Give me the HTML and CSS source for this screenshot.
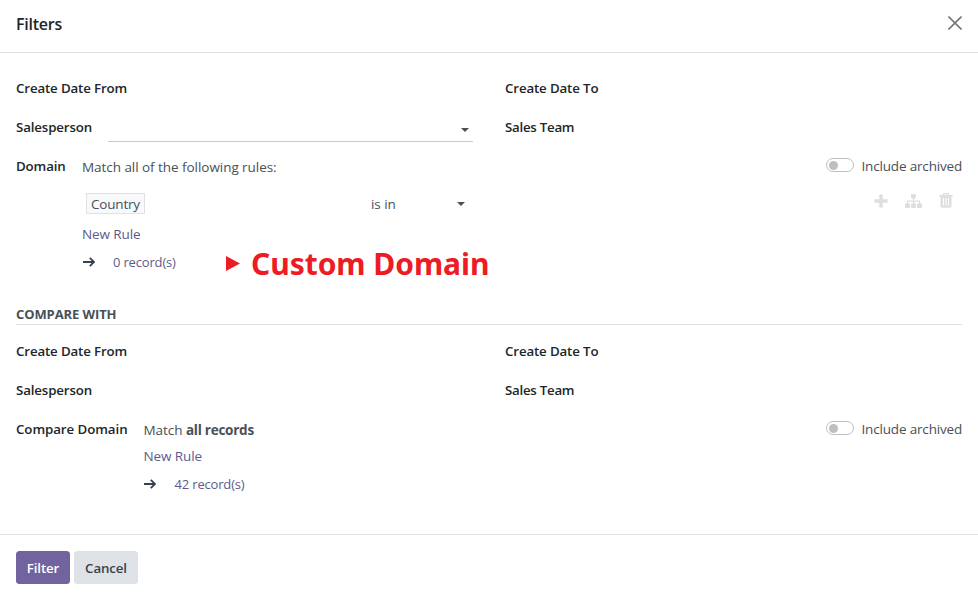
FILE: index.html
```html
<!DOCTYPE html>
<html lang="en">
<head>
<meta charset="utf-8">
<title>Filters</title>
<link rel="stylesheet" href="styles.css">
</head>
<body>
<svg class="defs" aria-hidden="true">
  <symbol id="arrow" viewBox="0 0 12 10"><path d="M0 5H11M6.8 .8L11 5L6.8 9.2" fill="none" stroke="currentColor" stroke-width="1.8"/></symbol>
</svg>
<div class="dialog">
  <header class="header">
    <h4 class="title">Filters</h4>
    <button class="close" aria-label="Close"><svg width="14" height="14" viewBox="0 0 14 14"><path d="M.5 .5L13.5 13.5M13.5 .5L.5 13.5" stroke="currentColor" stroke-width="1.6"/></svg></button>
  </header>
  <main class="body">
    <div class="row"><div class="cell label">Create Date From</div><div class="cell label">Create Date To</div></div>
    <div class="row">
      <div class="cell"><span class="label">Salesperson</span><div class="select"><i class="caret"></i></div></div>
      <div class="cell label team">Sales Team</div>
    </div>
    <div class="domain first">
      <span class="label domain-label">Domain</span>
      <div class="editor">
        <div class="line match"><span>Match all of the following rules:</span><label class="archived"><span class="switch"></span><span class="archived-text">Include archived</span></label></div>
        <div class="rule">
          <div class="rule-field"><span class="tag">Country</span></div>
          <div class="operator"><span class="op-text">is in</span><i class="caret"></i></div>
          <div class="tools">
            <svg width="14" height="14" viewBox="0 0 14 14"><path d="M5.3 .5H8.7V5.3H13.6V8.7H8.7V13.5H5.3V8.7H.4V5.3H5.3Z" fill="currentColor"/></svg>
            <svg width="17" height="14" viewBox="0 0 17 14"><path d="M6.7 0H10.3Q11 0 11 .7V3.8Q11 4.5 10.3 4.5H9.1V6.5H14.2Q15.2 6.5 15.2 7.5V9.5H16.3Q17 9.5 17 10.2V13.3Q17 14 16.3 14H12.7Q12 14 12 13.3V10.2Q12 9.5 12.7 9.5H14V7.7H9.1V9.5H10.3Q11 9.5 11 10.2V13.3Q11 14 10.3 14H6.7Q6 14 6 13.3V10.2Q6 9.5 6.7 9.5H7.9V7.7H3V9.5H4.3Q5 9.5 5 10.2V13.3Q5 14 4.3 14H.7Q0 14 0 13.3V10.2Q0 9.5 .7 9.5H1.8V7.5Q1.8 6.5 2.8 6.5H7.9V4.5H6.7Q6 4.5 6 3.8V.7Q6 0 6.7 0Z" fill="currentColor"/></svg>
            <svg width="14" height="15" viewBox="0 0 14 15"><path d="M4.7 2.2V.7H9.3V2.2" fill="none" stroke="currentColor" stroke-width="1.2"/><path d="M.3 2H13.7V3.5H12.5V13.3Q12.5 14.7 11.2 14.7H2.8Q1.5 14.7 1.5 13.3V3.5H.3Z" fill="currentColor"/><path d="M4.5 5V12.6M7 5V12.6M9.5 5V12.6" stroke="#fff"/></svg>
          </div>
        </div>
        <div class="line new"><a>New Rule</a></div>
        <div class="line records"><svg class="arrow" width="12" height="10"><use href="#arrow"/></svg><a class="count">0 record(s)</a>
          <div class="callout"><svg width="14" height="16" viewBox="0 0 14 16"><path d="M0 0L14 7.5L0 15Z" fill="currentColor"/></svg><span>Custom Domain</span></div>
        </div>
      </div>
    </div>
    <h5 class="section">COMPARE WITH</h5>
    <div class="row"><div class="cell label">Create Date From</div><div class="cell label">Create Date To</div></div>
    <div class="row"><div class="cell label">Salesperson</div><div class="cell label team">Sales Team</div></div>
    <div class="domain">
      <span class="label compare-label">Compare Domain</span>
      <div class="editor">
        <div class="line match"><span>Match <b>all records</b></span><label class="archived"><span class="switch"></span><span class="archived-text">Include archived</span></label></div>
        <div class="line new compare-new"><a>New Rule</a></div>
        <div class="line records"><svg class="arrow" width="12" height="10"><use href="#arrow"/></svg><a class="count">42 record(s)</a></div>
      </div>
    </div>
  </main>
  <footer class="footer"><button class="btn primary">Filter</button><button class="btn">Cancel</button></footer>
</div>
</body>
</html>
```
FILE: styles.css
```css
* { box-sizing: border-box; }
body {
  margin: 0;
  background: #fff;
  color: #495057;
  font: 13.5px/20px "Open Sans", "Noto Sans", sans-serif;
  letter-spacing: -.05px;
  white-space: nowrap;
}
.defs { display: none; }
svg { display: block; flex: none; }
.dialog { display: flex; flex-direction: column; height: 595px; overflow: hidden; }
.header {
  display: flex;
  align-items: center;
  justify-content: space-between;
  height: 53px;
  padding: 0 16px 6px;
  border-bottom: 1px solid #dee2e6;
}
.title { margin: 0; padding-top: 2px; color: #212529; font-size: 16px; font-weight: 600; letter-spacing: -.24px; }
.close { padding: 0; border: 0; background: none; color: #777; }
.body { flex: 1; padding: 16px 16px 0; }
.row { display: flex; height: 39px; }
.cell { display: flex; flex: none; align-items: center; width: 489px; padding-bottom: 2px; }
.cell + .cell { width: 457px; }
.label { color: #212529; font-size: 13.3px; font-weight: 600; letter-spacing: -.14px; }
.team { letter-spacing: -.26px; }
.select {
  display: flex;
  align-items: center;
  justify-content: flex-end;
  width: 365px;
  height: 26px;
  margin: 5px 0 0 16px;
  padding: 2px 4px 0 0;
  border-bottom: 1px solid #c8cbce;
}
.cell > .label { width: 76px; }
.caret { border: 4px solid transparent; border-top-color: #495057; border-bottom: 0; }
.domain { display: flex; }
.first { height: 157px; }
.domain-label { width: 66px; margin-top: 9px; }
.compare-label { width: 127.5px; margin-top: 9px; letter-spacing: -.07px; }
.editor { flex: 1; padding-top: 10px; }
.line { display: flex; align-items: center; height: 20px; }
.line b { letter-spacing: -.25px; }
.match { justify-content: space-between; }
.archived { display: flex; align-items: center; margin-top: -2px; }
.archived-text { width: 100.5px; letter-spacing: -.17px; }
.switch {
  display: flex;
  align-items: center;
  width: 28px;
  height: 14px;
  margin: -2px 7.5px 0 0;
  padding-left: 2px;
  border: 1px solid #bfbfbf;
  border-radius: 7px;
}
.switch::before { content: ""; width: 9px; height: 9px; border-radius: 50%; background: #bfbfbf; }
.rule { display: flex; align-items: center; height: 34px; margin-top: 10px; }
.rule-field { width: 289px; padding: 0 0 2px 4px; }
.tag {
  display: inline-block;
  height: 21px;
  padding: 1px 4px 0;
  border: 1px solid #dee2e6;
  background: #f8f9fa;
  line-height: 19px;
  letter-spacing: -.19px;
}
.operator { display: flex; align-items: center; justify-content: space-between; width: 94px; }
.op-text { margin-top: -1px; }
.tools { display: flex; align-items: center; gap: 18px; margin: -7px 9px 0 auto; color: #dcdee0; }
.tools svg:nth-child(2) { margin: 0 -1px 0 -.5px; }
a { color: #5f5a8c; }
.new { margin-top: 3px; }
.compare-new { margin-top: 6px; }
.new a { letter-spacing: -.1px; }
.records { margin-top: 8px; color: #374151; }
.arrow { margin-left: .5px; }
.count { width: 63px; margin-left: 18.5px; font-size: 13px; font-weight: 500; letter-spacing: -.17px; }
.callout {
  display: flex;
  align-items: center;
  gap: 11px;
  margin: 3px 0 0 50px;
  color: #ed1c24;
  font: 700 30px/36px "Noto Sans", sans-serif;
  letter-spacing: -.05px;
}
.section {
  height: 21px;
  margin: 0 0 7px;
  border-bottom: 1px solid #dee2e6;
  color: #495057;
  font-size: 13px;
  font-weight: 700;
  line-height: 20px;
  letter-spacing: -.1px;
}
.footer { display: flex; gap: 4px; height: 61px; padding: 16px; border-top: 1px solid #dee2e6; }
.btn {
  width: 64px;
  height: 33px;
  padding: 1px 0 0;
  border: 0;
  border-radius: 3.5px;
  background: #dee2e6;
  color: #374151;
  font: 600 13.3px/32px "Open Sans", sans-serif;
  letter-spacing: -.12px;
}
.primary { width: 54px; background: #71639e; color: #fff; }
```
